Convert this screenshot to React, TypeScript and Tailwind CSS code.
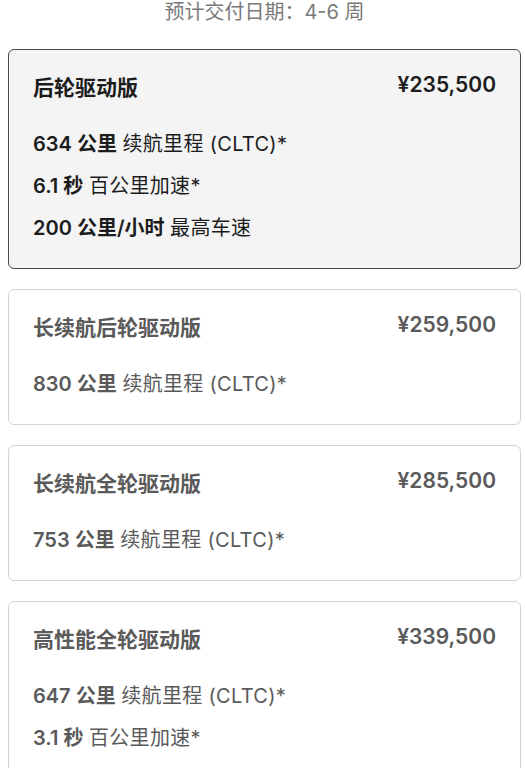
import React from 'react';

interface Spec {
  value: string;
  label: string;
}

interface Trim {
  name: string;
  price: string;
  specs: Spec[];
}

const trims: Trim[] = [
  {
    name: '后轮驱动版',
    price: '¥235,500',
    specs: [
      { value: '634 公里', label: '续航里程 (CLTC)*' },
      { value: '6.1 秒', label: '百公里加速*' },
      { value: '200 公里/小时', label: '最高车速' },
    ],
  },
  {
    name: '长续航后轮驱动版',
    price: '¥259,500',
    specs: [{ value: '830 公里', label: '续航里程 (CLTC)*' }],
  },
  {
    name: '长续航全轮驱动版',
    price: '¥285,500',
    specs: [{ value: '753 公里', label: '续航里程 (CLTC)*' }],
  },
  {
    name: '高性能全轮驱动版',
    price: '¥339,500',
    specs: [
      { value: '647 公里', label: '续航里程 (CLTC)*' },
      { value: '3.1 秒', label: '百公里加速*' },
    ],
  },
];

const TrimCard: React.FC<{ trim: Trim; selected: boolean }> = ({ trim, selected }) => (
  <div
    className={
      selected
        ? 'rounded-[6px] border border-[#4a4a4a] bg-[#f4f4f4] px-6 pt-6 pb-[19px] text-[#1c1c1c]'
        : 'rounded-[6px] border border-[#d4d4d4] bg-white px-6 pt-6 pb-[19px] text-[#5a5a5a]'
    }
  >
    <div className="flex items-start justify-between">
      <div className="text-[21px] font-semibold leading-[28px]">{trim.name}</div>
      <div className="-mt-[3px] text-[21px] font-semibold leading-[28px]">{trim.price}</div>
    </div>
    <div className="mt-[21px]">
      {trim.specs.map((s) => (
        <div key={s.label} className="text-[20px] leading-[42px]">
          <span className="font-semibold">{s.value}</span>{' '}
          <span className="tracking-[0.3px]">{s.label}</span>
        </div>
      ))}
    </div>
  </div>
);

export default function App() {
  return (
    <div
      className="h-[768px] overflow-hidden bg-white pl-2 pr-1"
      style={{ fontFamily: 'Inter, "Noto Sans CJK SC", sans-serif' }}
    >
      <div className="text-center text-[20px] leading-[24px] text-[#7a7a7a]">预计交付日期：4-6 周</div>
      <div className="mt-[25px] flex flex-col gap-5">
        {trims.map((t, i) => (
          <TrimCard key={t.name} trim={t} selected={i === 0} />
        ))}
      </div>
    </div>
  );
}
